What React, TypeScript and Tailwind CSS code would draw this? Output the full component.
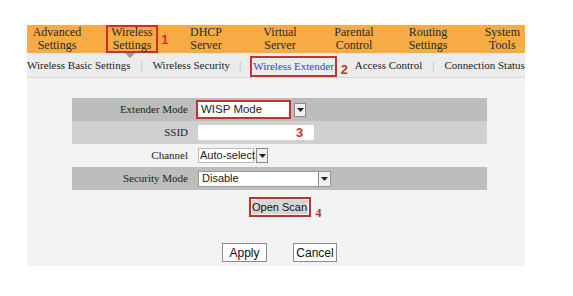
import React from 'react';

const serif = { fontFamily: '"Liberation Serif", "Times New Roman", serif' };
const sans = { fontFamily: 'Arial, "Liberation Sans", sans-serif' };

const NavItem = ({ top, bottom, boxed }: { top: string; bottom: string; boxed?: boolean }) => (
    <div
        className={`flex flex-col items-center justify-center leading-[13px] h-[28px] ${
            boxed ? 'border-2 border-[#c9302c] px-[3px]' : ''
        }`}
    >
        <span>{top}</span>
        <span>{bottom}</span>
    </div>
);

const Arrow = ({ className = '' }: { className?: string }) => (
    <span
        className={`inline-flex items-center justify-center w-[12px] h-[14px] border border-[#8a8a8a] bg-[#f0f0f0] ${className}`}
    >
        <svg width="7" height="4" viewBox="0 0 7 4">
            <path d="M0 0h7L3.5 4z" fill="#222" />
        </svg>
    </span>
);

const Mark = ({ n, className }: { n: string; className: string }) => (
    <span className={`absolute text-[#d0302a] font-bold text-[13px] leading-none ${className}`} style={sans}>
        {n}
    </span>
);

export default function App() {
    return (
        <div className="w-[573px] h-[296px] bg-white pt-[25px] pl-[27px]" style={serif}>
            <div className="w-[498px]">
                {/* top nav */}
                <div className="h-[28px] bg-[#f6ab44] flex items-center text-[12px] text-[#2a2a2a]">
                    <div className="w-[60px] flex justify-center">
                        <NavItem top="Advanced" bottom="Settings" />
                    </div>
                    <div className="ml-[8px] w-[74px] flex justify-center">
                        <div className="relative">
                            <NavItem top="Wireless" bottom="Settings" boxed />
                            <Mark n="1" className="left-[55px] top-[8px]" />
                            <span className="absolute left-[19px] top-[28px] w-0 h-0 border-l-[5px] border-r-[5px] border-t-[5px] border-l-transparent border-r-transparent border-t-[#9a9a9a]" />
                        </div>
                    </div>
                    <div className="w-[74px] flex justify-center"><NavItem top="DHCP" bottom="Server" /></div>
                    <div className="w-[74px] flex justify-center"><NavItem top="Virtual" bottom="Server" /></div>
                    <div className="w-[74px] flex justify-center"><NavItem top="Parental" bottom="Control" /></div>
                    <div className="w-[74px] flex justify-center"><NavItem top="Routing" bottom="Settings" /></div>
                    <div className="flex-1 flex justify-end pr-[5px]"><NavItem top="System" bottom="Tools" /></div>
                </div>

                {/* sub nav */}
                <div className="h-[25px] bg-[#ececec] border-b border-[#d8d8d8] flex items-center text-[11px] text-[#222] whitespace-nowrap">
                    <span>Wireless Basic Settings</span>
                    <span className="mx-[10px] text-[#aaa]">|</span>
                    <span>Wireless Security</span>
                    <span className="mx-[9px] text-[#aaa]">|</span>
                    <span className="border-2 border-[#c9302c] px-[1px] h-[21px] mt-[2px] flex items-center text-[#2f47c8]">
                        Wireless Extender
                    </span>
                    <span className="relative w-[18px] self-stretch">
                        <Mark n="2" className="left-[4px] top-[10px]" />
                    </span>
                    <span>Access Control</span>
                    <span className="mx-[10px] text-[#aaa]">|</span>
                    <span>Connection Status</span>
                </div>

                {/* content */}
                <div className="h-[188px] bg-[#f3f3f3] pt-[20px] pl-[45px]">
                    <div className="w-[415px] text-[11px] text-[#222]">
                        <div className="h-[23px] bg-[#bdbdbd] flex items-center">
                            <div className="w-[116px] text-right">Extender Mode</div>
                            <div className="ml-[8px] flex items-center gap-[3px]" style={sans}>
                                <div className="w-[95px] h-[19px] bg-white border-2 border-[#c9302c] flex items-center pl-[3px] text-[11.5px]">
                                    WISP Mode
                                </div>
                                <Arrow />
                            </div>
                        </div>
                        <div className="h-[23px] bg-[#d0d0d0] flex items-center">
                            <div className="w-[116px] text-right">SSID</div>
                            <div className="relative ml-[10px] w-[116px] h-[15px] bg-white">
                                <Mark n="3" className="left-[98px] top-[1px]" />
                            </div>
                        </div>
                        <div className="h-[23px] flex items-center">
                            <div className="w-[116px] text-right">Channel</div>
                            <div className="ml-[10px] flex items-center gap-[2px] whitespace-nowrap" style={sans}>
                                <div className="w-[56px] h-[15px] bg-white border border-[#bbb] flex items-center pl-[1px] text-[11px]">
                                    Auto-select
                                </div>
                                <Arrow className="h-[15px]" />
                            </div>
                        </div>
                        <div className="h-[23px] bg-[#bdbdbd] flex items-center">
                            <div className="w-[116px] text-right">Security Mode</div>
                            <div className="ml-[10px] w-[133px] h-[16px] bg-white border border-[#999] flex items-center justify-between pl-[3px] text-[11px]" style={sans}>
                                <span>Disable</span>
                                <Arrow className="h-[14px] border-0 border-l" />
                            </div>
                        </div>
                    </div>

                    <div className="w-[415px] flex justify-center pt-[7px]" style={sans}>
                        <div className="relative">
                            <div className="border-2 border-[#c9302c] p-[1px]">
                                <div className="h-[14px] w-[56px] bg-[#d6d6d6] flex items-center justify-center text-[11px] text-[#111] whitespace-nowrap">
                                    Open Scan
                                </div>
                            </div>
                            <span className="absolute left-[67px] top-[10px] text-[#b83027] font-bold text-[12px] leading-none" style={serif}>
                                4
                            </span>
                        </div>
                    </div>

                    <div className="w-[415px] flex justify-center gap-[26px] pt-[26px] text-[12px] text-[#111]" style={sans}>
                        <div className="w-[45px] h-[19px] bg-white border border-[#8a8a8a] flex items-center justify-center">
                            Apply
                        </div>
                        <div className="w-[44px] h-[19px] bg-white border border-[#8a8a8a] flex items-center justify-center">
                            Cancel
                        </div>
                    </div>
                </div>
            </div>
        </div>
    );
}
